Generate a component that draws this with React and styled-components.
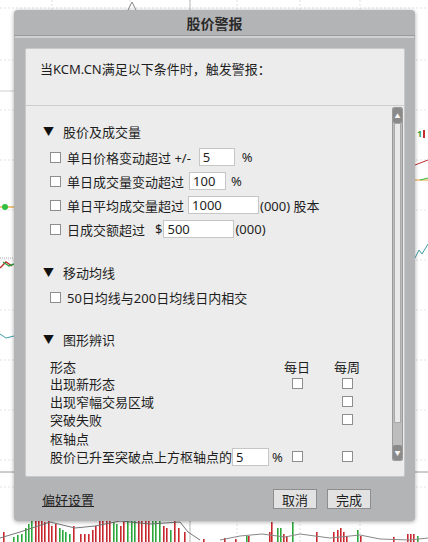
import React from 'react';
import styled, { createGlobalStyle } from 'styled-components';

const GlobalStyle = createGlobalStyle`
  html, body {
    margin: 0;
    padding: 0;
    background: #ffffff;
  }
  body {
    font-family: "Noto Sans", "Noto Sans CJK SC", sans-serif;
    color: #1e1e1e;
  }
`;

const Page = styled.div`
  position: relative;
  width: 428px;
  height: 542px;
  overflow: hidden;
  background: #ffffff;
`;

const Chart = styled.svg`
  display: block;
`;

const Modal = styled.div`
  position: absolute;
  left: 14px;
  top: 10px;
  width: 401px;
  height: 511px;
  display: flex;
  flex-direction: column;
  background: #b3b4b6;
  border-radius: 4px;
  box-shadow: 0 1px 4px rgba(0, 0, 0, 0.35);
  box-sizing: border-box;
`;

const TitleBar = styled.div`
  height: 25px;
  display: flex;
  align-items: center;
  justify-content: center;
  font-family: "Noto Sans CJK SC", sans-serif;
  font-size: 14px;
  font-weight: bold;
  color: #2a2a2a;
  border-bottom: 1px solid #9a9b9d;
  box-shadow: 0 3px 0 -1px #cfd0d2;
`;

const Body = styled.div`
  padding: 12px 10px 0 11px;
`;

const Panel = styled.div`
  height: 429px;
  display: flex;
  flex-direction: column;
  background: #ececec;
  border: 1px solid #c9c9c9;
  border-radius: 2px;
  box-sizing: border-box;
`;

const Intro = styled.div`
  height: 57px;
  flex-shrink: 0;
  padding: 10px 0 0 14px;
  box-sizing: border-box;
  font-size: 13px;
  border-bottom: 1px solid #cdcdcd;
`;

const ScrollArea = styled.div`
  flex: 1;
  display: flex;
  min-height: 0;
`;

const Content = styled.div`
  flex: 1;
  min-width: 0;
  padding-top: 15px;
  font-size: 13px;
`;

const Heading = styled.div`
  height: 20px;
  display: flex;
  align-items: center;
  gap: 9px;
  padding-left: 17px;
  margin-top: ${p => p.$gap || 0}px;
`;

const Arrow = styled.span`
  font-size: 11px;
  color: #111;
`;

const Rows = styled.div`
  display: flex;
  flex-direction: column;
  padding-left: 24px;
  margin-top: ${p => p.$gap || 0}px;
`;

const Row = styled.div`
  height: 24px;
  display: flex;
  align-items: center;
  white-space: nowrap;
`;

const Box = styled.span`
  width: 11px;
  height: 11px;
  flex-shrink: 0;
  background: #ffffff;
  border: 1px solid #8e8e8e;
  box-sizing: border-box;
  margin-right: ${p => (p.$bare ? 0 : 6)}px;
`;

const Field = styled.span`
  width: ${p => p.$w}px;
  height: 18px;
  display: inline-flex;
  align-items: center;
  padding-left: 3px;
  margin: 0 ${p => p.$mr || 4}px 0 ${p => p.$ml || 0}px;
  background: #ffffff;
  border: 1px solid #c6c6c6;
  box-sizing: border-box;
  flex-shrink: 0;
`;

const Dollar = styled.span`
  margin-left: 10px;
`;

const Grid = styled.div`
  display: grid;
  grid-template-columns: minmax(0, 1fr) 36px 36px;
  column-gap: 14px;
  padding: 0 27px 0 24px;
  margin-top: 9px;
`;

const Cell = styled.div`
  height: ${p => (p.$head ? 16 : 18.4)}px;
  display: flex;
  align-items: center;
  justify-content: ${p => (p.$center ? 'center' : 'flex-start')};
  white-space: nowrap;
`;

const Scrollbar = styled.div`
  width: 11px;
  flex-shrink: 0;
  margin: 1px 1px 15px 0;
  display: flex;
  flex-direction: column;
  background: #bdbdbd;
  border: 1px solid #9a9a9a;
  border-radius: 2px;
  box-sizing: border-box;
`;

const ScrollBtn = styled.div`
  height: 15px;
  flex-shrink: 0;
  display: flex;
  align-items: center;
  justify-content: center;
  background: #8a8a8a;
  border-radius: 2px;
  font-size: 6px;
  color: #f4f4f4;
`;

const Thumb = styled.div`
  height: 300px;
  background: #e9e9e9;
  border: 1px solid #a9a9a9;
  box-sizing: border-box;
  margin: 0 1px;
`;

const Track = styled.div`
  flex: 1;
`;

const Footer = styled.div`
  flex: 1;
  display: flex;
  align-items: center;
  padding: 0 44px 0 28px;
  font-family: "Noto Sans CJK SC", sans-serif;
  font-size: 13px;
`;

const Link = styled.span`
  text-decoration: underline;
  color: #222;
  margin-right: auto;
`;

const Button = styled.div`
  width: 44px;
  height: 20px;
  display: flex;
  align-items: center;
  justify-content: center;
  background: #e2e2e2;
  border: 1px solid #8e8e8e;
  box-sizing: border-box;
  margin-left: ${p => p.$ml || 0}px;
`;

const bars = [
  [3, 10, 'r'], [13, 5, 'g'], [17, 7, 'g'], [21, 8, 'g'], [25, 14, 'g'], [28, 18, 'g'], [31, 22, 'g'],
  [35, 22, 'r'], [38, 22, 'r'], [41, 22, 'r'], [44, 20, 'r'], [48, 22, 'r'], [51, 16, 'r'], [55, 18, 'r'],
  [59, 14, 'g'], [62, 12, 'g'], [65, 10, 'g'], [69, 8, 'g'], [73, 16, 'r'], [80, 8, 'r'], [84, 8, 'r'],
  [88, 8, 'r'], [92, 12, 'r'], [95, 16, 'r'], [99, 22, 'r'], [102, 22, 'r'], [106, 22, 'r'], [109, 22, 'r'],
  [113, 20, 'g'], [116, 18, 'g'], [120, 16, 'r'], [123, 20, 'r'], [127, 22, 'g'], [131, 22, 'g'],
  [134, 22, 'g'], [138, 22, 'r'], [141, 22, 'r'], [145, 22, 'r'], [148, 22, 'r'], [152, 22, 'g'],
  [155, 22, 'g'], [159, 22, 'g'], [163, 16, 'r'], [166, 14, 'r'], [170, 12, 'g'], [174, 22, 'r'],
  [178, 14, 'r'], [184, 10, 'r'], [203, 3, 'r'], [224, 4, 'r'], [235, 3, 'r'], [246, 6, 'g'],
  [248, 6, 'r'], [269, 10, 'r'], [271, 20, 'r'], [277, 14, 'g'], [280, 14, 'g'], [283, 8, 'r'],
  [286, 6, 'r'], [292, 20, 'g'], [316, 10, 'r'], [333, 10, 'r'], [337, 12, 'r'], [340, 14, 'r'],
  [343, 10, 'r'], [346, 6, 'r'], [357, 12, 'g'], [360, 6, 'r'], [393, 5, 'r'], [407, 8, 'r'],
  [410, 8, 'r'], [413, 8, 'r'], [417, 6, 'g'],
];

function ChartBackground() {
  const hLines = [8, 60, 110, 160, 210, 260, 310, 360, 410, 460, 487];
  const vLines = [52, 130, 190, 237, 300, 360];
  return (
    <Chart width="428" height="542" viewBox="0 0 428 542">
      {hLines.map(y => (
        <line key={'h' + y} x1="0" x2="428" y1={y} y2={y} stroke="#e3e3e3" strokeDasharray="2 2" />
      ))}
      {vLines.map(x => (
        <line key={'v' + x} x1={x} x2={x} y1="0" y2="542" stroke="#e0e0e0" strokeDasharray="2 2" />
      ))}
      <line x1="190" x2="190" y1="0" y2="542" stroke="#bdbdbd" />
      <line x1="0" x2="14" y1="472" y2="472" stroke="#9a9a9a" />
      <line x1="415" x2="428" y1="472" y2="472" stroke="#9a9a9a" />
      <line x1="0" x2="14" y1="91" y2="91" stroke="#cfcfcf" />
      <path d="M128 10 L132 2 L136 10" fill="none" stroke="#888" />
      <path d="M0 207 L14 207" stroke="#e8a030" strokeWidth="1.2" />
      <circle cx="5" cy="207" r="3" fill="#30c040" />
      <path d="M0 268 L6 262 L12 266" fill="none" stroke="#c03030" strokeWidth="1.4" />
      <path d="M3 262 L9 266 L14 264" fill="none" stroke="#30a040" strokeWidth="1.4" />
      <line x1="0" x2="14" y1="258" y2="258" stroke="#aaa" strokeDasharray="1 1" />
      <path d="M0 334 L6 338 L14 336" fill="none" stroke="#40a0a8" />
      <text x="417" y="137" fontSize="9" fill="#30a040" fontWeight="bold">1</text>
      <rect x="423" y="130" width="2" height="8" fill="#c03030" />
      <path d="M415 165 L428 160" stroke="#c03030" />
      <path d="M415 180 L428 180" stroke="#e8a030" />
      <path d="M420 180 L428 178" stroke="#30c040" />
      <path d="M415 258 L419 250 L422 254 L428 244" fill="none" stroke="#40a0a8" />
      {bars.map(([x, h, c], i) => (
        <rect key={i} x={x} y={542 - h} width="1.6" height={h} fill={c === 'r' ? '#c8282d' : '#2ca83a'} />
      ))}
      <path d="M0 538 L20 532 L50 522 L75 528 L95 526 L120 521 L150 524 L180 522 L188 532 L200 540"
        fill="none" stroke="#777" />
      <path d="M220 540 L240 536 L262 534 L285 537 L300 534 L330 538 L360 535 L380 539 L410 540 L428 538"
        fill="none" stroke="#888" />
    </Chart>
  );
}

export default function App() {
  return (
    <Page>
      <GlobalStyle />
      <ChartBackground />
      <Modal>
        <TitleBar>股价警报</TitleBar>
        <Body>
          <Panel>
            <Intro>当KCM.CN满足以下条件时，触发警报：</Intro>
            <ScrollArea>
              <Content>
                <Heading><Arrow>▼</Arrow>股价及成交量</Heading>
                <Rows $gap={4}>
                  <Row><Box />单日价格变动超过 +/-<Field $w={36} $ml={8} $mr={7}>5</Field>%</Row>
                  <Row><Box />单日成交量变动超过<Field $w={37} $ml={5} $mr={5}>100</Field>%</Row>
                  <Row><Box />单日平均成交量超过<Field $w={71} $ml={4} $mr={1}>1000</Field>(000) 股本</Row>
                  <Row><Box />日成交额超过<Dollar>$</Dollar><Field $w={71} $ml={1} $mr={1}>500</Field>(000)</Row>
                </Rows>
                <Heading $gap={21}><Arrow>▼</Arrow>移动均线</Heading>
                <Rows $gap={3}>
                  <Row><Box />50日均线与200日均线日内相交</Row>
                </Rows>
                <Heading $gap={20}><Arrow>▼</Arrow>图形辨识</Heading>
                <Grid>
                  <Cell $head>形态</Cell>
                  <Cell $head $center>每日</Cell>
                  <Cell $head $center>每周</Cell>
                  <Cell>出现新形态</Cell>
                  <Cell $center><Box $bare /></Cell>
                  <Cell $center><Box $bare /></Cell>
                  <Cell>出现窄幅交易区域</Cell>
                  <Cell />
                  <Cell $center><Box $bare /></Cell>
                  <Cell>突破失败</Cell>
                  <Cell />
                  <Cell $center><Box $bare /></Cell>
                  <Cell>枢轴点</Cell>
                  <Cell />
                  <Cell />
                  <Cell>股价已升至突破点上方枢轴点的<Field $w={37} $ml={0} $mr={3}>5</Field>%</Cell>
                  <Cell $center><Box $bare /></Cell>
                  <Cell $center><Box $bare /></Cell>
                </Grid>
              </Content>
              <Scrollbar>
                <ScrollBtn>▲</ScrollBtn>
                <Thumb />
                <Track />
                <ScrollBtn>▼</ScrollBtn>
              </Scrollbar>
            </ScrollArea>
          </Panel>
        </Body>
        <Footer>
          <Link>偏好设置</Link>
          <Button>取消</Button>
          <Button $ml={10}>完成</Button>
        </Footer>
      </Modal>
    </Page>
  );
}
